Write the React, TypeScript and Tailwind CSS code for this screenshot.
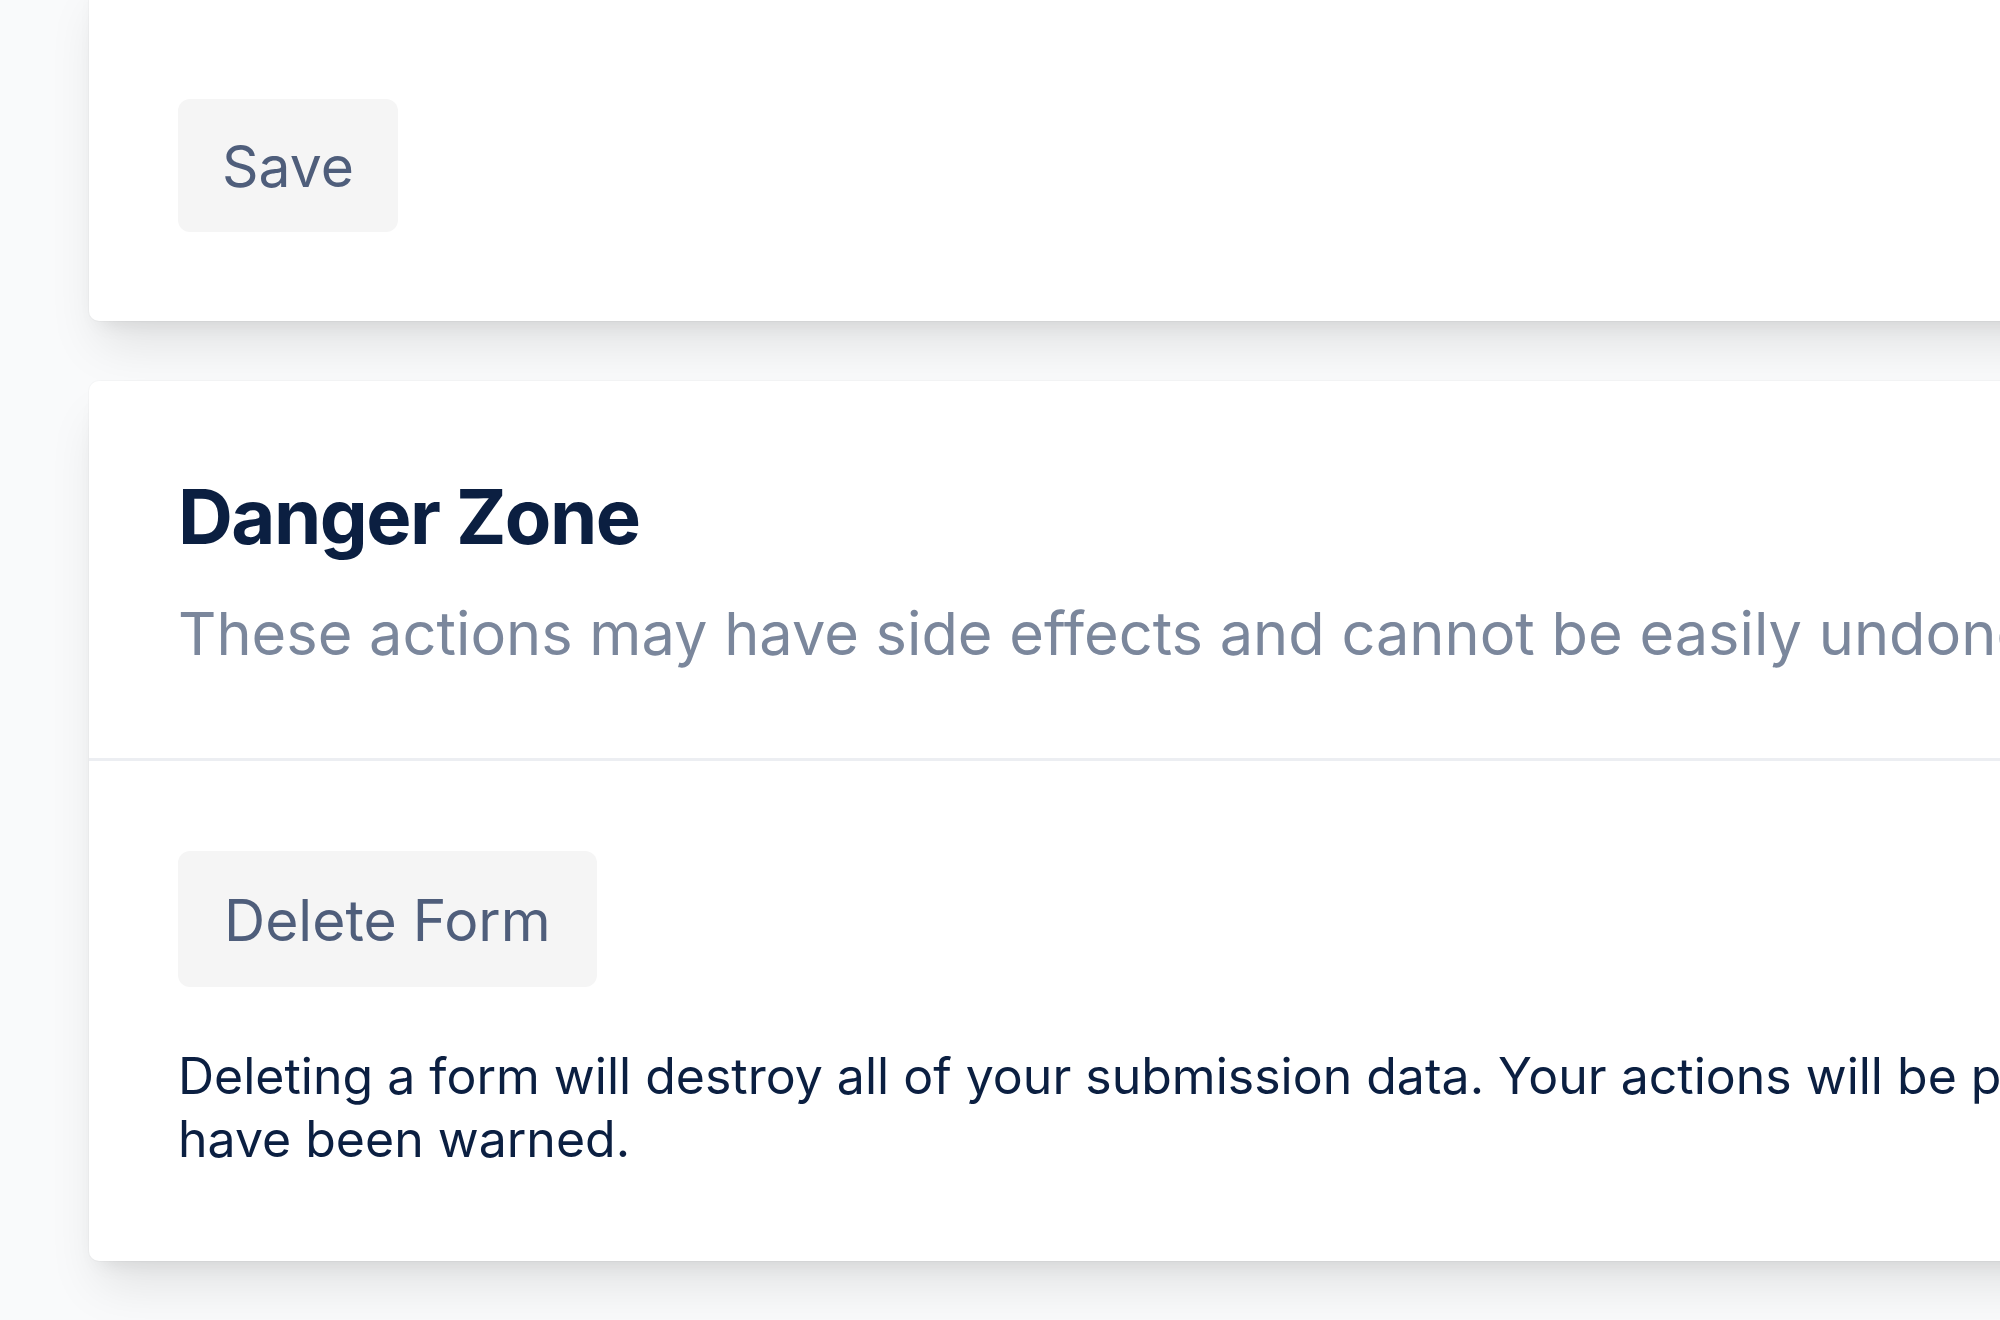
import React from "react";

export default function App() {
  return (
    <div className="h-[1320px] w-full overflow-hidden bg-[#f9fafb] font-['Inter','Liberation_Sans',sans-serif]">
      <div className="flex flex-col gap-[60px] pl-[89px]">
        {/* Card 1 (bottom of a settings card) */}
        <div className="-mt-[30px] w-[2400px] rounded-[10px] bg-white px-[89px] pt-[129px] pb-[89px] shadow-[0_32px_48px_-10px_rgba(0,0,0,0.10),0_12px_20px_-12px_rgba(0,0,0,0.10),0_0_0_1px_rgba(0,0,0,0.02)]">
          <button className="flex h-[133px] items-center rounded-[12px] bg-[#f5f5f5] px-[44px] pt-[3px] text-[57px] leading-[70px] text-[#4f5e7b]">
            Save
          </button>
        </div>

        {/* Card 2: Danger Zone */}
        <div className="w-[2400px] rounded-[10px] bg-white shadow-[0_32px_48px_-10px_rgba(0,0,0,0.10),0_12px_20px_-12px_rgba(0,0,0,0.10),0_0_0_1px_rgba(0,0,0,0.02)]">
          <div className="border-b-[3px] border-[#eceef2] px-[89px] pt-[88px] pb-[85px]">
            <h2 className="text-[76px] leading-[95px] font-bold tracking-[-0.02em] text-[#0b1f41]">Danger Zone</h2>
            <p className="mt-[29px] text-[59.5px] leading-[80px] text-[#7b879c] whitespace-nowrap">
              These actions may have side effects and cannot be easily undone.
            </p>
          </div>
          <div className="px-[89px] pt-[90px] pb-[90px]">
            <button className="flex h-[136px] items-center rounded-[12px] bg-[#f5f5f5] px-[46px] pt-[4px] text-[57px] leading-[70px] text-[#4f5e7b]">
              Delete Form
            </button>
            <p className="mt-[58px] text-[50px] leading-[63px] text-[#0b1f41]">
              <span className="whitespace-nowrap">
                Deleting a form will destroy all of your submission data. Your actions will be permanent and you
              </span>
              <br />
              have been warned.
            </p>
          </div>
        </div>
      </div>
    </div>
  );
}
